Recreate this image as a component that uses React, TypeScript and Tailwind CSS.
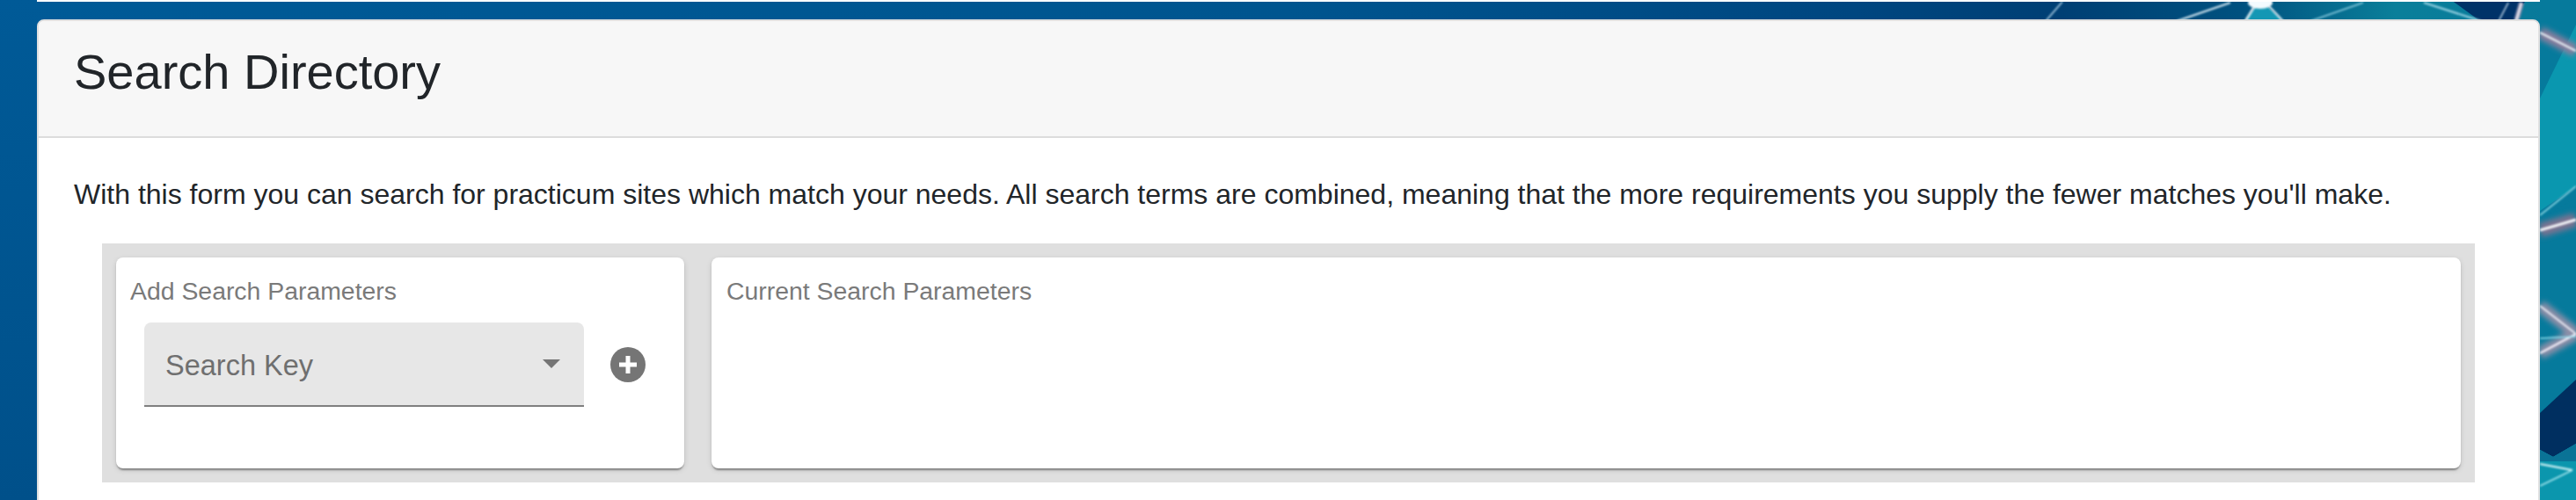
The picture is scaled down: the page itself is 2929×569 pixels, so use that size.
const SANS = "font-['Liberation_Sans',Arial,sans-serif]";

const Backdrop = () => (
  <svg className="absolute inset-0" width="2929" height="569" viewBox="0 0 2929 569" aria-hidden="true">
    <defs>
      <linearGradient id="base" x1="0" y1="0" x2="2929" y2="0" gradientUnits="userSpaceOnUse">
        <stop offset="0" stopColor="#005a97" />
        <stop offset="0.5" stopColor="#00558f" />
        <stop offset="0.72" stopColor="#004680" />
        <stop offset="0.8" stopColor="#003f74" />
        <stop offset="0.87" stopColor="#00517f" />
        <stop offset="0.93" stopColor="#0a7f9a" />
        <stop offset="1" stopColor="#08789a" />
      </linearGradient>
      <linearGradient id="leftFade" x1="0" y1="0" x2="0" y2="569" gradientUnits="userSpaceOnUse">
        <stop offset="0" stopColor="#005a97" />
        <stop offset="1" stopColor="#00508a" />
      </linearGradient>
      <filter id="soft"><feGaussianBlur stdDeviation="3" /></filter>
      <filter id="softer"><feGaussianBlur stdDeviation="1" /></filter>
    </defs>
    <rect width="2929" height="569" fill="url(#base)" />
    <rect width="42" height="569" fill="url(#leftFade)" />

    {/* top strip */}
    <polygon points="2787,0 2872,0 2858,24 2820,24" fill="#003268" />
    <polygon points="2553,24 2570,0 2596,24" fill="#1497b4" />
    <g filter="url(#softer)">
      <line x1="2345" y1="2" x2="2326" y2="24" stroke="#b8d8ec" strokeWidth="1.5" />
      <line x1="2475" y1="24" x2="2536" y2="3" stroke="#d5e8f2" strokeWidth="2" />
      <line x1="2553" y1="24" x2="2566" y2="3" stroke="#e8f6fa" strokeWidth="2.5" />
      <line x1="2596" y1="24" x2="2576" y2="3" stroke="#e8f6fa" strokeWidth="2" />
      <line x1="2627" y1="24" x2="2687" y2="3" stroke="#8fcfe2" strokeWidth="1.5" />
      <line x1="2756" y1="3" x2="2821" y2="24" stroke="#9fd6e6" strokeWidth="2" />
      <line x1="2852" y1="3" x2="2841" y2="24" stroke="#c8dcec" strokeWidth="1.5" />
      <line x1="2867" y1="3" x2="2861" y2="24" stroke="#8d8fb0" strokeWidth="6" />
      <line x1="2867" y1="3" x2="2861" y2="24" stroke="#f0f0f8" strokeWidth="2" />
    </g>
    <ellipse cx="2570" cy="3" rx="14" ry="7" fill="#f4fbff" filter="url(#softer)" />

    {/* right edge */}
    <rect x="2888" y="0" width="41" height="569" fill="#067a9c" />
    <polygon points="2929,28 2888,112 2888,240 2929,212" fill="#0a97af" />
    <polygon points="2888,250 2929,225 2929,330 2888,330" fill="#067a9c" />
    <polygon points="2929,432 2888,470 2888,512 2903,520 2929,505" fill="#002f60" />
    <polygon points="2888,512 2903,520 2929,505 2929,569 2888,569" fill="#0b96ad" />
    <polygon points="2888,512 2903,520 2929,505 2929,525 2888,525" fill="#0a7396" />
    <g filter="url(#soft)">
      <line x1="2888" y1="37" x2="2929" y2="58" stroke="#8a7f9e" strokeWidth="14" />
      <line x1="2888" y1="262" x2="2929" y2="250" stroke="#7d7391" strokeWidth="16" />
      <line x1="2888" y1="348" x2="2929" y2="380" stroke="#8d8fa8" strokeWidth="14" />
      <line x1="2888" y1="402" x2="2929" y2="380" stroke="#8d8fa8" strokeWidth="14" />
    </g>
    <g filter="url(#softer)">
      <line x1="2888" y1="37" x2="2929" y2="58" stroke="#e4eef4" strokeWidth="2" />
      <line x1="2888" y1="245" x2="2929" y2="212" stroke="#a8ecf2" strokeWidth="1.5" />
      <line x1="2888" y1="262" x2="2929" y2="250" stroke="#f2f4f8" strokeWidth="3" />
      <line x1="2888" y1="348" x2="2929" y2="380" stroke="#e8ecf4" strokeWidth="2" />
      <line x1="2888" y1="402" x2="2929" y2="380" stroke="#f0eef8" strokeWidth="2.5" />
      <line x1="2888" y1="385" x2="2929" y2="383" stroke="#8fe0f0" strokeWidth="1.5" />
      <line x1="2888" y1="528" x2="2925" y2="535" stroke="#e0f8fa" strokeWidth="2" />
      <line x1="2888" y1="553" x2="2925" y2="535" stroke="#a8e8f0" strokeWidth="1.5" />
    </g>
  </svg>
);

const Sheet: React.FC<{ className: string; children: React.ReactNode }> = ({ className, children }) => (
  <div className={`bg-white rounded-lg h-[240px] shadow-[0_4px_2px_-2px_rgba(0,0,0,0.25),0_2px_2px_0_rgba(0,0,0,0.14),0_2px_6px_0_rgba(0,0,0,0.12)] ${className}`}>
    {children}
  </div>
);

const SearchKey = () => (
  <div className="flex items-center mt-[19px] ml-[32px]">
    <div className="flex items-center justify-between w-[500px] h-[96px] pl-[24px] pr-[27px] bg-[#e7e7e7] rounded-t-lg border-b-2 border-[#7f7f7f]">
      <span className="text-[32.5px] text-[#6f6f6f] leading-none mt-[4px]">Search Key</span>
      <svg width="20" height="10" viewBox="0 0 20 10" aria-hidden="true">
        <path d="M0 0h20L10 10z" fill="#757575" />
      </svg>
    </div>
    <svg className="ml-[30px]" width="40" height="40" viewBox="0 0 40 40" aria-hidden="true">
      <circle cx="20" cy="20" r="20" fill="#757575" />
      <path d="M17.5 10h5v7.5H30v5h-7.5V30h-5v-7.5H10v-5h7.5z" fill="#fff" />
    </svg>
  </div>
);

const App = () => {
  return (
    <div className={`relative w-[2929px] h-[569px] overflow-hidden ${SANS}`}>
      <Backdrop />
      <div className="relative flex flex-col pl-[42px] pr-[41px]">
        <div className="h-[2px] bg-white" />
        <div className="mt-[20px] h-[600px] bg-white rounded-t-lg border-2 border-[#e0e0e0]">
          <div className="h-[133px] bg-[#f7f7f7] border-b-2 border-[#dcdcdc] rounded-t-md pl-[40px] pt-[24px]">
            <h3 className="text-[56px] leading-[67px] text-[#212529]">Search Directory</h3>
          </div>
          <div className="pl-[40px] pt-[40px]">
            <p className="text-[32px] leading-[48px] text-[#212529]">
              With this form you can search for practicum sites which match your needs. All search terms are combined, meaning that the more requirements you supply the fewer matches you'll make.
            </p>
          </div>
          <div className="flex gap-[31px] mt-[32px] ml-[72px] mr-[72px] p-[16px] h-[272px] bg-[#dfdfdf]">
            <Sheet className="w-[646px] shrink-0">
              <div className="pl-[16px] pt-[21px] text-[28.4px] leading-[34px] text-[#7a7a7a]">Add Search Parameters</div>
              <SearchKey />
            </Sheet>
            <Sheet className="flex-1">
              <div className="pl-[17px] pt-[21px] text-[28.4px] leading-[34px] text-[#7a7a7a]">Current Search Parameters</div>
            </Sheet>
          </div>
        </div>
      </div>
    </div>
  );
};

export default App;
